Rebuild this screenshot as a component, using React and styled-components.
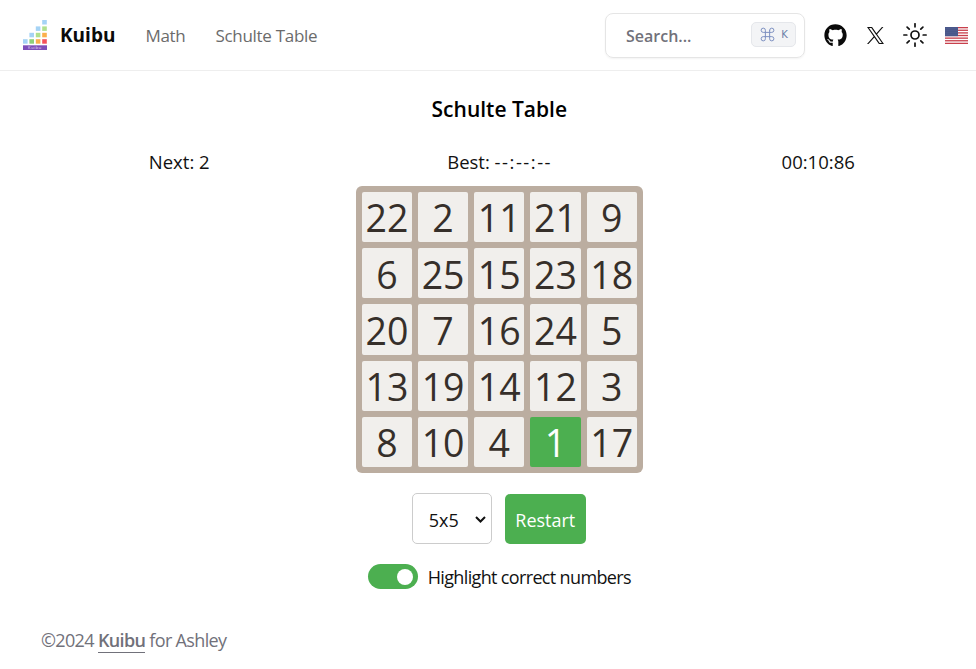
import React, { useState } from 'react';
import styled, { createGlobalStyle } from 'styled-components';
import { FaGithub } from 'react-icons/fa';
import { Command } from 'lucide-react';

const GRID = [
  [22, 2, 11, 21, 9],
  [6, 25, 15, 23, 18],
  [20, 7, 16, 24, 5],
  [13, 19, 14, 12, 3],
  [8, 10, 4, 1, 17],
];

// logo staircase, [col, row, colour]
const LOGO_BLOCKS = [
  [3, 0, '#a5d3f5'],
  [2, 1, '#a5d3f5'], [3, 1, '#b0e08e'],
  [1, 2, '#a5d3f5'], [2, 2, '#b0e08e'], [3, 2, '#fbb04c'],
  [0, 3, '#a5d3f5'], [1, 3, '#8fd07a'], [2, 3, '#fbb04c'], [3, 3, '#f5515b'],
];

// the select's arrow, as the reference draws it (heavier than the default here)
const CHEVRON = `url("data:image/svg+xml,%3Csvg xmlns='http://www.w3.org/2000/svg' width='11' height='7' viewBox='0 0 11 7'%3E%3Cpath d='M1 1l4.5 4.5L10 1' fill='none' stroke='%23111' stroke-width='2'/%3E%3C/svg%3E")`;

const App = () => {
  const [highlight, setHighlight] = useState(true);

  return (
    <Page>
      <GlobalStyle />
      <Header>
        <Brand>
          <svg width="24" height="30" viewBox="0 0 24 30">
            {LOGO_BLOCKS.map(([c, r, fill]) => (
              <rect key={`${c}-${r}`} x={c * 6.4} y={r * 6.4} width="4.6" height="4.5" fill={fill} />
            ))}
            <rect x="0" y="25.3" width="24" height="4.7" fill="#7e4fb8" />
            <text x="12" y="29" textAnchor="middle" fontSize="4" fill="#e8dcf5" letterSpacing="0.6">Kuibu</text>
          </svg>
          <BrandName>Kuibu</BrandName>
        </Brand>
        <Nav>
          <NavLink>Math</NavLink>
          <NavLink>Schulte Table</NavLink>
        </Nav>
        <Tools>
          <SearchBox>
            <SearchText>Search...</SearchText>
            <Kbd><Command size={17} strokeWidth={1.4} /><small>K</small></Kbd>
          </SearchBox>
          <IconSlot><FaGithub size={23} color="#0a0a0a" /></IconSlot>
          <IconSlot>
            <svg width="17" height="17" viewBox="0 0 24 24" fill="#111">
              <path d="M14.258 10.152L23.176 0h-2.113l-7.747 8.813L7.133 0H0l9.352 13.328L0 23.973h2.113l8.176-9.309 6.531 9.309h7.133zm-2.895 3.293l-.949-1.328L2.875 1.56h3.246l6.086 8.523.945 1.328 7.91 11.078h-3.246zm0 0" />
            </svg>
          </IconSlot>
          <IconSlot>
            <svg width="24" height="24" viewBox="0 0 24 24" fill="none" stroke="#111" strokeWidth="1.7" strokeLinecap="round">
              <circle cx="12" cy="12" r="4" />
              <path d="M12 0.8v3M12 20.2v3M.8 12h3M20.2 12h3M4.1 4.1l2.1 2.1M17.8 17.8l2.1 2.1M4.1 19.9l2.1-2.1M17.8 6.2l2.1-2.1" />
            </svg>
          </IconSlot>
          <FlagSlot>
            <svg width="23" height="17" viewBox="0 0 23 17">
              <rect width="23" height="17" fill="#fff" />
              {[0, 1, 2, 3, 4, 5, 6].map((i) => (
                <rect key={i} y={i * 2.62} width="23" height="1.31" fill="#c8404c" />
              ))}
              <rect width="13" height="9.2" fill="#3c4a80" />
              <rect width="13" height="9.2" fill="url(#stars)" />
              <defs>
                <pattern id="stars" width="2" height="2" patternUnits="userSpaceOnUse">
                  <circle cx="1" cy="1" r="0.4" fill="#c4cbe2" />
                </pattern>
              </defs>
            </svg>
          </FlagSlot>
        </Tools>
      </Header>

      <Main>
        <Title>Schulte Table</Title>
        <Stats>
          <span>Next: 2</span>
          <BestStat>Best: <BestValue>--:--:--</BestValue></BestStat>
          <span>00:10:86</span>
        </Stats>
        <Board>
          {GRID.flat().map((n) => (
            <Cell key={n} $done={n === 1 && highlight}>{n}</Cell>
          ))}
        </Board>
        <Controls>
          <SizeSelect defaultValue="5x5">
            <option>3x3</option>
            <option>4x4</option>
            <option>5x5</option>
          </SizeSelect>
          <RestartButton>Restart</RestartButton>
        </Controls>
        <ToggleRow onClick={() => setHighlight(!highlight)}>
          <Switch $on={highlight}><Knob $on={highlight} /></Switch>
          <span>Highlight correct numbers</span>
        </ToggleRow>
      </Main>

      <Footer>©2024 <FooterLink>Kuibu</FooterLink> for Ashley</Footer>
    </Page>
  );
};

export default App;

const GlobalStyle = createGlobalStyle`
  html, body {
    margin: 0;
    padding: 0;
    background: #fff;
    font-family: "Open Sans", "Noto Sans", sans-serif;
  }
`;

const Page = styled.div`
  width: 976px;
  height: 669px;
  overflow: hidden;
  color: #111;
`;

const Header = styled.header`
  height: 70px;
  display: flex;
  align-items: center;
  padding: 0 0 0 23px;
  border-bottom: 1px solid #eeeeee;
`;

const Brand = styled.div`
  display: flex;
  align-items: center;
  gap: 13px;
`;

const BrandName = styled.span`
  font-size: 19px;
  font-weight: 700;
  color: #0b0b0b;
`;

const Nav = styled.nav`
  display: flex;
  gap: 30px;
  margin-left: 30px;
`;

const NavLink = styled.a`
  font-size: 17px;
  letter-spacing: -0.3px;
  color: #6b6b6b;
`;

const Tools = styled.div`
  margin-left: auto;
  display: flex;
  align-items: center;
`;

const SearchBox = styled.div`
  width: 200px;
  height: 45px;
  box-sizing: border-box;
  display: flex;
  align-items: center;
  justify-content: space-between;
  padding: 0 8px 0 20px;
  border: 1px solid #e5e5e5;
  border-radius: 8px;
  box-shadow: 0 1px 2px rgba(0, 0, 0, 0.05);
  margin-right: 10px;
`;

const SearchText = styled.span`
  font-size: 16px;
  font-weight: 600;
  color: #71717a;
  position: relative;
  top: 1px;
`;

const Kbd = styled.kbd`
  width: 45px;
  height: 25px;
  box-sizing: border-box;
  display: flex;
  align-items: center;
  justify-content: center;
  gap: 5px;
  margin-bottom: 2px;
  background: #f3f4f6;
  border: 1px solid #e5e7eb;
  border-radius: 5px;
  color: #7b8fc0;
  font-family: "DejaVu Sans", sans-serif;

  small {
    font-size: 10px;
    color: #6b7fa8;
  }
`;

const IconSlot = styled.div`
  width: 40px;
  display: flex;
  justify-content: center;
`;

const FlagSlot = styled.div`
  width: 41px;
  box-sizing: border-box;
  padding-left: 10px;
  display: flex;
`;

const Main = styled.main`
  padding: 0 18.4px 0 41px;
  display: flex;
  flex-direction: column;
  align-items: center;
`;

const Title = styled.h1`
  margin: 24px 0 0;
  font-size: 21px;
  line-height: 28px;
  font-weight: 600;
  color: #000;
`;

const Stats = styled.div`
  width: 706px;
  margin: 26px 0 0 5px;
  display: flex;
  justify-content: space-between;
  font-size: 18.5px;
  line-height: 26px;
`;

const BestStat = styled.span`
  margin-left: 8px;
`;

const BestValue = styled.span`
  letter-spacing: 1.5px;
`;

const Board = styled.div`
  width: 287px;
  height: 287px;
  box-sizing: border-box;
  margin-top: 11px;
  padding: 6px;
  display: grid;
  grid-template-columns: repeat(5, minmax(0, 1fr));
  grid-template-rows: repeat(5, minmax(0, 1fr));
  gap: 6px;
  background: #bbada0;
  border-radius: 6px;
`;

const Cell = styled.div`
  display: flex;
  align-items: center;
  justify-content: center;
  padding-top: 2px;
  background: ${(p) => (p.$done ? '#4caf50' : '#f1efec')};
  color: ${(p) => (p.$done ? '#fff' : '#362f2a')};
  border-radius: 2px;
  font-size: 37.5px;
  line-height: 1;
`;

const Controls = styled.div`
  margin: 20px 1px 0 0;
  display: flex;
  align-items: center;
  gap: 13px;
`;

const SizeSelect = styled.select`
  appearance: none;
  width: 80px;
  height: 51px;
  box-sizing: border-box;
  padding: 2px 20px 0 16px;
  background: #fff ${CHEVRON} no-repeat 62px 22px;
  border: 1px solid #ccc;
  border-radius: 5px;
  font-family: inherit;
  font-size: 18px;
  color: #111;
`;

const RestartButton = styled.button`
  width: 81px;
  height: 50px;
  padding: 2px 0 0;
  border: 0;
  border-radius: 5px;
  background: #4caf50;
  color: #fff;
  font-family: inherit;
  font-size: 18px;
`;

const ToggleRow = styled.label`
  margin-top: 20px;
  display: flex;
  align-items: center;
  gap: 10px;
  font-size: 18px;
  letter-spacing: -0.65px;
  line-height: 24px;
`;

const Switch = styled.div`
  width: 50px;
  height: 25px;
  border-radius: 13px;
  position: relative;
  background: ${(p) => (p.$on ? '#4caf50' : '#ccc')};
`;

const Knob = styled.div`
  position: absolute;
  top: 4.5px;
  left: ${(p) => (p.$on ? '29px' : '4px')};
  width: 16px;
  height: 16px;
  border-radius: 50%;
  background: #fff;
`;

const Footer = styled.footer`
  margin: 38px 0 0 41px;
  font-size: 18px;
  letter-spacing: -0.65px;
  line-height: 26px;
  color: #71717a;
`;

const FooterLink = styled.a`
  font-weight: 600;
  border-bottom: 1px solid #71717a;
`;
